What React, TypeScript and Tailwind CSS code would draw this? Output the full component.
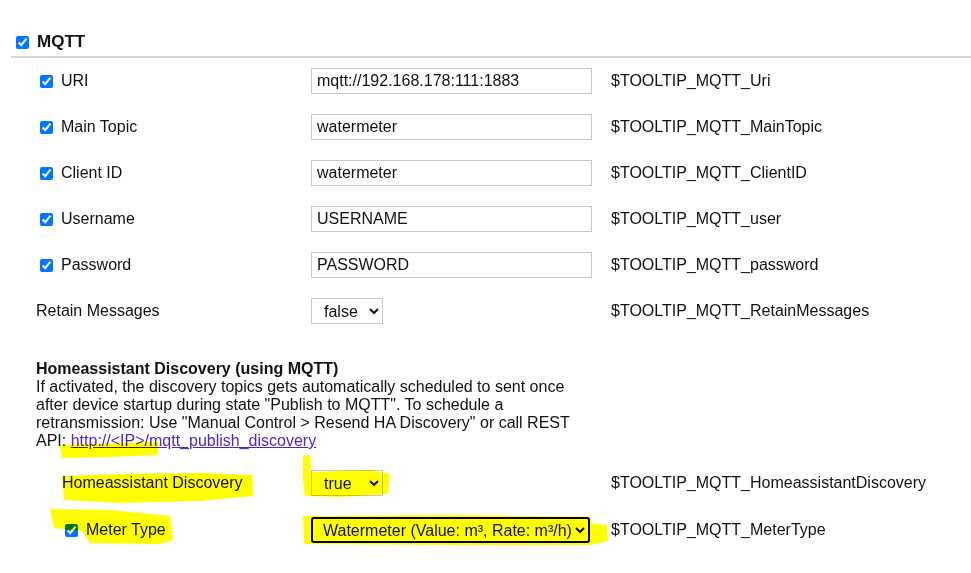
import React from 'react';

interface Row {
  label: string;
  checkbox: boolean;
  kind: 'text' | 'select';
  value: string;
  tooltip: string;
}

const rows: Row[] = [
  { label: 'URI', checkbox: true, kind: 'text', value: 'mqtt://192.168.178:111:1883', tooltip: '$TOOLTIP_MQTT_Uri' },
  { label: 'Main Topic', checkbox: true, kind: 'text', value: 'watermeter', tooltip: '$TOOLTIP_MQTT_MainTopic' },
  { label: 'Client ID', checkbox: true, kind: 'text', value: 'watermeter', tooltip: '$TOOLTIP_MQTT_ClientID' },
  { label: 'Username', checkbox: true, kind: 'text', value: 'USERNAME', tooltip: '$TOOLTIP_MQTT_user' },
  { label: 'Password', checkbox: true, kind: 'text', value: 'PASSWORD', tooltip: '$TOOLTIP_MQTT_password' },
  { label: 'Retain Messages', checkbox: false, kind: 'select', value: 'false', tooltip: '$TOOLTIP_MQTT_RetainMessages' },
];

function Check() {
  return <input type="checkbox" defaultChecked className="m-0 w-[13px] h-[13px] accent-[#0075ff]" />;
}

// yellow marker strokes drawn over the screenshot
function Highlights() {
  return (
    <svg className="absolute inset-0 pointer-events-none mix-blend-multiply" width="971" height="573" viewBox="0 0 971 573">
      <g fill="#ffff00">
        <path d="M60,445 L158,442 L158,455 L110,457 L62,458 Z" />
        <path d="M62,476 L120,474 L200,473 L252,475 L253,496 L200,501 L120,503 L64,500 Z" />
        <path d="M303,456 L310,455 L311,472 L370,470 L390,474 L388,494 L340,497 L305,496 L303,480 Z" />
        <path d="M50,509 L110,510 L170,516 L173,540 L160,544 L90,543 L82,531 L54,528 Z" />
        <path d="M303,516 L450,515 L590,517 L592,524 L607,525 L608,541 L590,545 L450,545 L304,544 Z" />
      </g>
    </svg>
  );
}

export default function App() {
  return (
    <div className="relative w-[971px] h-[573px] overflow-hidden bg-white text-[#111] text-[16px] leading-[18px] font-['Liberation_Sans',Arial,sans-serif]">
      {/* Section header */}
      <div className="ml-[11px] h-[58px] flex items-end pl-[5px] pb-[4px] border-b-2 border-[#d3d3d3]">
        <div className="flex items-center gap-[8px] h-[20px]">
          <Check />
          <span className="font-bold text-[17px] leading-[20px]">MQTT</span>
        </div>
      </div>

      <div className="pl-[36px]">
        {rows.map((r) => (
          <div key={r.label} className="grid grid-cols-[275px_300px_1fr] h-[46px] items-center">
            <div className="flex items-center gap-[8px]">
              {r.checkbox && <span className="ml-[4px] flex"><Check /></span>}
              <span>{r.label}</span>
            </div>
            <div>
              {r.kind === 'text' ? (
                <input
                  type="text"
                  defaultValue={r.value}
                  className="w-[281px] h-[26px] border border-[#c8c8c8] px-[5px] text-[16px] outline-none"
                />
              ) : (
                <select defaultValue={r.value} className="w-[72px] h-[26px] border border-[#c8c8c8] pl-[8px] text-[16px] bg-white">
                  <option value="true">true</option>
                  <option value="false">false</option>
                </select>
              )}
            </div>
            <div>{r.tooltip}</div>
          </div>
        ))}

        {/* Homeassistant discovery */}
        <div className="mt-[26px] w-[550px]">
          <div className="font-bold">Homeassistant Discovery (using MQTT)</div>
          <p>
            If activated, the discovery topics gets automatically scheduled to sent once after device startup during
            state "Publish to MQTT". To schedule a retransmission: Use "Manual Control &gt; Resend HA Discovery" or
            call REST API:{' '}
            <a href="#" className="underline text-[#5324c4]">http://&lt;IP&gt;/mqtt_publish_discovery</a>
          </p>
        </div>

        <div className="mt-[10px] grid grid-cols-[275px_300px_1fr] h-[46px] items-center">
          <div className="pl-[26px]">Homeassistant Discovery</div>
          <div>
            <select defaultValue="true" className="w-[72px] h-[26px] border border-[#c8c8c8] pl-[8px] text-[16px] bg-white">
              <option value="true">true</option>
              <option value="false">false</option>
            </select>
          </div>
          <div>$TOOLTIP_MQTT_HomeassistantDiscovery</div>
        </div>

        <div className="grid grid-cols-[275px_300px_1fr] h-[48px] items-center">
          <div className="pl-[29px] flex items-center gap-[8px]">
            <Check />
            <span>Meter Type</span>
          </div>
          <div>
            <select className="w-[279px] h-[26px] border-2 border-black rounded-[3px] pl-[6px] text-[16px] bg-white">
              <option>Watermeter (Value: m³, Rate: m³/h)</option>
            </select>
          </div>
          <div>$TOOLTIP_MQTT_MeterType</div>
        </div>
      </div>

      <Highlights />
    </div>
  );
}
